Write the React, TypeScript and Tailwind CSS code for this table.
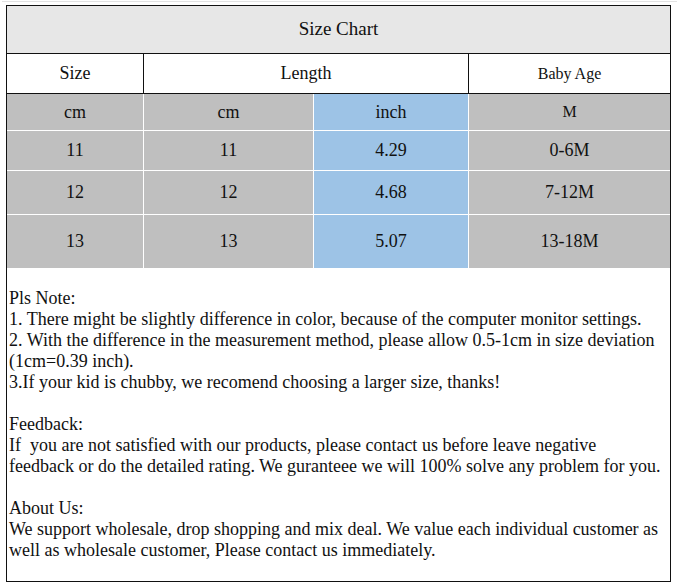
const serif = { fontFamily: '"Liberation Serif", "Times New Roman", serif' }

const rows = [
  { a: '11', b: '11', c: '4.29', d: '0-6M', h: 'h-[39px]' },
  { a: '12', b: '12', c: '4.68', d: '7-12M', h: 'h-[43px]' },
  { a: '13', b: '13', c: '5.07', d: '13-18M', h: 'h-[53px]' },
]

export default function App() {
  return (
    <div className="w-[679px] h-[586px] bg-white text-[#111] relative" style={serif}>
      <div className="h-px bg-[#e2e2e2] mx-[2px] mt-px" />
      <div className="ml-[6px] mt-[3px] w-[665px] h-[577px] border border-[#111] flex flex-col">
        {/* title */}
        <div className="h-[48px] bg-[#e7e7e7] border-b border-[#111] flex items-center justify-center text-[19px]">
          Size Chart
        </div>

        {/* header */}
        <div className="grid grid-cols-[136px_324px_1fr] gap-px bg-[#111] border-b border-[#111]">
          <div className="h-[39px] bg-white flex items-center justify-center text-[18px]">Size</div>
          <div className="h-[39px] bg-white flex items-center justify-center text-[18px]">Length</div>
          <div className="h-[39px] bg-white flex items-center justify-center text-[16px]">Baby Age</div>
        </div>

        {/* table body */}
        <div className="grid grid-cols-[136px_169px_154px_1fr] gap-px bg-white text-[18px]">
          <div className="h-[36px] bg-[#bfbfbf] flex items-center justify-center">cm</div>
          <div className="h-[36px] bg-[#bfbfbf] flex items-center justify-center">cm</div>
          <div className="h-[36px] bg-[#9dc3e6] flex items-center justify-center">inch</div>
          <div className="h-[36px] bg-[#bfbfbf] flex items-center justify-center text-[16px]">M</div>
          {rows.map(r => (
            <>
              <div key={r.a + 'a'} className={`${r.h} bg-[#bfbfbf] flex items-center justify-center`}>{r.a}</div>
              <div key={r.a + 'b'} className={`${r.h} bg-[#bfbfbf] flex items-center justify-center`}>{r.b}</div>
              <div key={r.a + 'c'} className={`${r.h} bg-[#9dc3e6] flex items-center justify-center`}>{r.c}</div>
              <div key={r.a + 'd'} className={`${r.h} bg-[#bfbfbf] flex items-center justify-center`}>{r.d}</div>
            </>
          ))}
        </div>

        {/* notes */}
        <div className="pt-[20px] pl-[2px] text-[18px] leading-[21px] whitespace-nowrap">
          <p>Pls Note:</p>
          <p>1. There might be slightly difference in color, because of the computer monitor settings.</p>
          <p>2. With the difference in the measurement method, please allow 0.5-1cm in size deviation</p>
          <p>(1cm=0.39 inch).</p>
          <p>3.If your kid is chubby, we recomend choosing a larger size, thanks!</p>
          <p className="h-[21px]" />
          <p>Feedback:</p>
          <p>If&nbsp; you are not satisfied with our products, please contact us before leave negative</p>
          <p>feedback or do the detailed rating. We guranteee we will 100% solve any problem for you.</p>
          <p className="h-[21px]" />
          <p>About Us:</p>
          <p>We support wholesale, drop shopping and mix deal. We value each individual customer as</p>
          <p>well as wholesale customer, Please contact us immediately.</p>
        </div>
      </div>
    </div>
  )
}
